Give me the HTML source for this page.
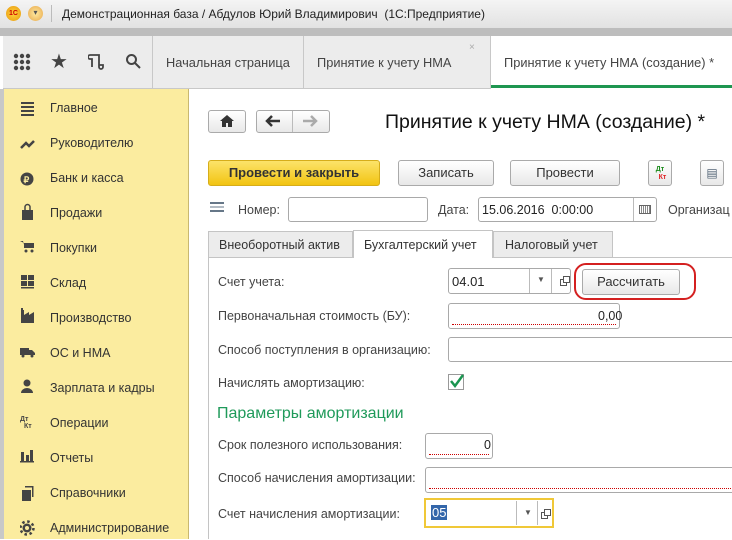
<!DOCTYPE html>
<html><head><meta charset="utf-8"><style>
*{margin:0;padding:0;box-sizing:border-box}
body{width:732px;height:539px;overflow:hidden;position:relative;font-family:"Liberation Sans",sans-serif;font-size:12.5px;color:#333;background:#fff}
.a{position:absolute}
.inp{position:absolute;border:1px solid #a9a9a9;border-radius:3px;background:#fff}
.btn{position:absolute;border:1px solid #aaa;border-radius:3px;background:linear-gradient(#fff,#e8e8e8);text-align:center;font-size:13px;color:#333}
.lbl{position:absolute;font-size:12.5px;color:#444}
.side div{position:absolute;left:50px;font-size:12.5px;color:#333}
.red{border-bottom:1px dotted #c00}
</style></head><body>
<div class="a" style="left:0;top:0;width:732px;height:28px;background:linear-gradient(#f4f4f4,#e2e2e2)"></div>
<div class="a" style="left:0;top:28px;width:732px;height:8px;background:#bdbdbd"></div>
<div class="a" style="left:6px;top:6px;width:15px;height:15px;border-radius:50%;background:radial-gradient(#ffd23c,#e89a10);font-size:7px;color:#c00;font-weight:bold;text-align:center;line-height:15px">1С</div>
<div class="a" style="left:28px;top:6px;width:15px;height:15px;border-radius:50%;background:radial-gradient(#ffe9a0,#e8a84a);font-size:8px;text-align:center;line-height:14px;color:#555">▾</div>
<div class="a" style="left:51px;top:5px;width:1px;height:17px;background:#bbb"></div>
<div class="a" style="left:62px;top:7px;font-size:12px;color:#222">Демонстрационная база / Абдулов Юрий Владимирович &nbsp;(1С:Предприятие)</div>
<div class="a" style="left:3px;top:36px;width:729px;height:53px;background:#ececec;border-bottom:1px solid #c8c8c8"></div>
<div class="a" style="left:152px;top:36px;width:1px;height:53px;background:#c8c8c8"></div>
<div class="a" style="left:303px;top:36px;width:1px;height:53px;background:#c8c8c8"></div>
<div class="a" style="left:490px;top:36px;width:242px;height:53px;background:#fff;border-left:1px solid #c8c8c8"></div>
<div class="a" style="left:491px;top:85px;width:241px;height:3px;background:#1e9650"></div>
<svg class="a" style="left:13px;top:53px" width="20" height="18" viewBox="0 0 20 18" fill="#444"><g><circle cx="3" cy="3" r="2.2"/><circle cx="9" cy="3" r="2.2"/><circle cx="15" cy="3" r="2.2"/><circle cx="3" cy="9" r="2.2"/><circle cx="9" cy="9" r="2.2"/><circle cx="15" cy="9" r="2.2"/><circle cx="3" cy="15" r="2.2"/><circle cx="9" cy="15" r="2.2"/><circle cx="15" cy="15" r="2.2"/></g></svg>
<div class="a" style="left:50px;top:49px;font-size:20px;color:#444">★</div>
<svg class="a" style="left:88px;top:53px" width="18" height="18" viewBox="0 0 18 18" fill="none" stroke="#444" stroke-width="1.8"><path d="M2 2h9v12a2 2 0 0 0 4 0v-2h-4M2 2a2 2 0 0 0 0 4h2v8"/></svg>
<svg class="a" style="left:125px;top:53px" width="17" height="17" viewBox="0 0 17 17" fill="none" stroke="#444" stroke-width="2"><circle cx="6.5" cy="6.5" r="4.5"/><path d="M10 10l5 5"/></svg>
<div class="a" style="left:166px;top:55px;font-size:12.8px;color:#444">Начальная страница</div>
<div class="a" style="left:317px;top:55px;font-size:12.8px;color:#444">Принятие к учету НМА</div>
<div class="a" style="left:469px;top:42px;font-size:10px;color:#aaa">×</div>
<div class="a" style="left:504px;top:55px;font-size:12.8px;color:#444">Принятие к учету НМА (создание) *</div>
<div class="a" style="left:0;top:89px;width:4px;height:450px;background:#c8c8c8"></div>
<div class="a side" style="left:4px;top:89px;width:185px;height:450px;background:#fbec9f;border-right:1px solid #c9b870"></div>
<div class="side">
<div style="top:101px">Главное</div><div style="top:136px">Руководителю</div><div style="top:171px">Банк и касса</div><div style="top:206px">Продажи</div><div style="top:241px">Покупки</div><div style="top:276px">Склад</div><div style="top:311px">Производство</div><div style="top:346px">ОС и НМА</div><div style="top:381px">Зарплата и кадры</div><div style="top:416px">Операции</div><div style="top:451px">Отчеты</div><div style="top:486px">Справочники</div><div style="top:521px">Администрирование</div>
</div>
<svg class="a" style="left:20px;top:100px" width="16" height="440" viewBox="0 0 16 440" fill="#444">
<rect x="1" y="2" width="13" height="2"/><rect x="1" y="6" width="13" height="2"/><rect x="1" y="10" width="13" height="2"/><rect x="1" y="14" width="13" height="2"/>
<path d="M1 48l5-5 3 3 5-5" stroke="#444" stroke-width="2.5" fill="none"/>
<circle cx="7" cy="79" r="6.5"/><text x="3.5" y="83" font-size="9" fill="#fbec9f" font-weight="bold">₽</text>
<path d="M2 110h11v10H2z"/><path d="M5 110v-3a2.5 2.5 0 0 1 5 0v3" stroke="#444" stroke-width="1.5" fill="none"/>
<path d="M0 141h3l2 7h8l1-5H4" fill="#444"/><rect x="4" y="143" width="10" height="5"/><circle cx="6" cy="151" r="1.5"/><circle cx="12" cy="151" r="1.5"/>
<rect x="1" y="175" width="6" height="5"/><rect x="8" y="175" width="6" height="5"/><rect x="1" y="181" width="6" height="5"/><rect x="8" y="181" width="6" height="5"/><rect x="1" y="187" width="13" height="1.5"/>
<path d="M1 223v-13h3v5l5-3v3l5-3v11z"/><rect x="1" y="208" width="2" height="3"/>
<rect x="0" y="248" width="9" height="7"/><path d="M9 250h3l3 3v2H9z"/><circle cx="3" cy="256" r="1.5"/><circle cx="12" cy="256" r="1.5"/>
<circle cx="7" cy="283" r="3.5"/><path d="M1 293a6 5 0 0 1 12 0z"/>
<text x="0" y="321" font-size="7" font-weight="bold">Дт</text><text x="4" y="328" font-size="7" font-weight="bold">Кт</text>
<rect x="1" y="352" width="3" height="9"/><rect x="6" y="355" width="3" height="6"/><rect x="10" y="350" width="3" height="11"/><rect x="0" y="361" width="14" height="1.5"/>
<rect x="2" y="390" width="9" height="11"/><rect x="5" y="386" width="8" height="1.5"/><rect x="12" y="386" width="1.5" height="11"/>
<circle cx="7" cy="428" r="4.5"/><circle cx="7" cy="428" r="6.5" fill="none" stroke="#444" stroke-width="2.5" stroke-dasharray="2.5 2.6"/><circle cx="7" cy="428" r="2" fill="#fbec9f"/>
</svg>
<div class="btn" style="left:208px;top:110px;width:38px;height:23px"></div>
<svg class="a" style="left:220px;top:114px" width="14" height="13" viewBox="0 0 14 13" fill="#333"><path d="M7 1L0 7h2v6h4V9h2v4h4V7h2z"/></svg>
<div class="btn" style="left:256px;top:110px;width:74px;height:23px"></div>
<div class="a" style="left:292px;top:111px;width:1px;height:21px;background:#bbb"></div>
<svg class="a" style="left:265px;top:115px" width="16" height="12" viewBox="0 0 16 12"><path d="M15 6H3M7 1L2 6l5 5" stroke="#333" stroke-width="2.5" fill="none"/></svg>
<svg class="a" style="left:302px;top:115px" width="16" height="12" viewBox="0 0 16 12"><path d="M1 6h12M9 1l5 5-5 5" stroke="#aaa" stroke-width="2.5" fill="none"/></svg>
<div class="a" style="left:385px;top:111px;font-size:19.5px;color:#111">Принятие к учету НМА (создание) *</div>
<div class="btn" style="left:208px;top:160px;width:172px;height:26px;background:linear-gradient(#fce36a,#f2c412);border-color:#d6ad1a;font-weight:bold;line-height:24px;color:#333">Провести и закрыть</div>
<div class="btn" style="left:398px;top:160px;width:96px;height:26px;line-height:24px">Записать</div>
<div class="btn" style="left:510px;top:160px;width:110px;height:26px;line-height:24px">Провести</div>
<div class="btn" style="left:648px;top:160px;width:24px;height:26px;font-size:7px;font-weight:bold;line-height:8px;padding-top:5px"><span style="color:#1a8a1a">Дт</span><br><span style="color:#d22;padding-left:5px">Кт</span></div>
<div class="btn" style="left:700px;top:160px;width:24px;height:26px;font-size:12px;line-height:24px;color:#567">▤</div>
<div class="a" style="left:210px;top:202px;width:14px;height:10px;border-top:2px solid #678;border-bottom:2px solid #678;background:linear-gradient(#fff 40%,#678 40%,#678 60%,#fff 60%)"></div>
<div class="lbl" style="left:238px;top:203px">Номер:</div>
<div class="inp" style="left:288px;top:197px;width:140px;height:25px"></div>
<div class="lbl" style="left:438px;top:203px">Дата:</div>
<div class="inp" style="left:478px;top:197px;width:179px;height:25px"></div>
<div class="a" style="left:633px;top:198px;width:1px;height:23px;background:#bbb"></div>
<div class="a" style="left:482px;top:203px;font-size:12.5px;color:#222">15.06.2016 &nbsp;0:00:00</div>
<div class="a" style="left:639px;top:205px;width:12px;height:9px;border:1px solid #666;background:repeating-linear-gradient(90deg,#fff 0 1px,#888 1px 2px)"></div>
<div class="lbl" style="left:668px;top:203px">Организац</div>
<div class="a" style="left:208px;top:231px;width:145px;height:27px;background:#ececec;border:1px solid #c4c4c4"></div>
<div class="a" style="left:353px;top:230px;width:140px;height:28px;background:#fff;border:1px solid #c4c4c4;border-bottom:none"></div>
<div class="a" style="left:493px;top:231px;width:120px;height:27px;background:#ececec;border:1px solid #c4c4c4"></div>
<div class="lbl" style="left:219px;top:238px;color:#333">Внеоборотный актив</div>
<div class="lbl" style="left:364px;top:238px;color:#333">Бухгалтерский учет</div>
<div class="lbl" style="left:505px;top:238px;color:#333">Налоговый учет</div>
<div class="a" style="left:208px;top:258px;width:1px;height:281px;background:#c4c4c4"></div>
<div class="a" style="left:613px;top:257px;width:119px;height:1px;background:#c4c4c4"></div>
<div class="lbl" style="left:218px;top:275px">Счет учета:</div>
<div class="inp" style="left:448px;top:268px;width:123px;height:26px"></div>
<div class="a" style="left:529px;top:269px;width:1px;height:24px;background:#bbb"></div>
<div class="a" style="left:551px;top:269px;width:1px;height:24px;background:#bbb"></div>
<div class="a" style="left:452px;top:274px;font-size:13px;color:#222">04.01</div>
<div class="a" style="left:537px;top:275px;font-size:8px;color:#555">▼</div>
<div class="a" style="left:560px;top:279px;width:7px;height:7px;border:1px solid #555"></div><div class="a" style="left:563px;top:276px;width:7px;height:7px;border:1px solid #555;background:#fff"></div>
<div class="btn" style="left:582px;top:269px;width:98px;height:26px;line-height:24px">Рассчитать</div>
<div class="a" style="left:574px;top:263px;width:122px;height:37px;border:2.5px solid #d42020;border-radius:12px"></div>
<div class="lbl" style="left:218px;top:309px">Первоначальная стоимость (БУ):</div>
<div class="inp" style="left:448px;top:303px;width:172px;height:26px"></div>
<div class="a red" style="left:452px;top:324px;width:164px"></div>
<div class="a" style="left:598px;top:309px;font-size:12.5px;color:#222">0,00</div>
<div class="lbl" style="left:218px;top:343px">Способ поступления в организацию:</div>
<div class="inp" style="left:448px;top:337px;width:290px;height:25px"></div>
<div class="lbl" style="left:218px;top:376px">Начислять амортизацию:</div>
<div class="a" style="left:448px;top:374px;width:16px;height:16px;border:1px solid #999;background:#fff"></div>
<svg class="a" style="left:449px;top:373px" width="16" height="16"><path d="M2 8l4 5L14 2" stroke="#1a9550" stroke-width="2.5" fill="none"/></svg>
<div class="a" style="left:217px;top:405px;font-size:16px;color:#1f9a5a">Параметры амортизации</div>
<div class="lbl" style="left:218px;top:438px">Срок полезного использования:</div>
<div class="inp" style="left:425px;top:433px;width:68px;height:26px"></div>
<div class="a red" style="left:429px;top:454px;width:60px"></div>
<div class="a" style="left:484px;top:438px;color:#222">0</div>
<div class="lbl" style="left:218px;top:471px">Способ начисления амортизации:</div>
<div class="inp" style="left:425px;top:467px;width:320px;height:26px"></div>
<div class="a red" style="left:429px;top:488px;width:310px"></div>
<div class="lbl" style="left:218px;top:507px">Счет начисления амортизации:</div>
<div class="a" style="left:424px;top:498px;width:130px;height:30px;border:2px solid #f0c838;background:#fff"></div>
<div class="a" style="left:516px;top:501px;width:1px;height:24px;background:#bbb"></div>
<div class="a" style="left:537px;top:501px;width:1px;height:24px;background:#bbb"></div>
<div class="a" style="left:431px;top:505px;font-size:13px;color:#fff;background:#3366aa;padding:0 1px">05</div>
<div class="a" style="left:524px;top:508px;font-size:8px;color:#555">▼</div>
<div class="a" style="left:541px;top:512px;width:7px;height:7px;border:1px solid #555"></div><div class="a" style="left:544px;top:509px;width:7px;height:7px;border:1px solid #555;background:#fff"></div>
</body></html>
